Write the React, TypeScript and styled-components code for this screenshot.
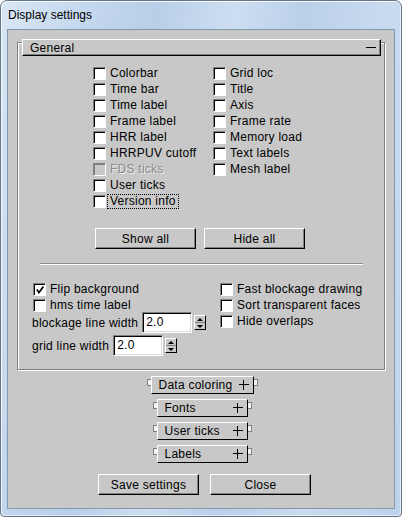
import React from "react";
import styled, { createGlobalStyle } from "styled-components";

const GlobalStyle = createGlobalStyle`
  html, body { margin: 0; padding: 0; background: #ffffff; }
  body { font-family: "Liberation Sans", Arial, sans-serif; font-size: 12px; color: #000; }
  * { box-sizing: border-box; }
`;

const Window = styled.div`
  width: 402px;
  height: 517px;
  border: 1px solid #66778a;
  border-radius: 7px 7px 4px 4px;
  padding: 0 6px 7px 6px;
  display: flex;
  flex-direction: column;
  background: linear-gradient(
    100deg,
    #d9e6f4 0%,
    #c3d7ed 18%,
    #b8cfe9 32%,
    #cddef1 48%,
    #bad0ea 62%,
    #c9dbef 80%,
    #bdd3eb 100%
  );
  box-shadow: inset 1px 1px 0 rgba(255, 255, 255, 0.75), inset -1px -1px 0 rgba(255, 255, 255, 0.55);
`;

const TitleBar = styled.div`
  height: 28px;
  display: flex;
  align-items: center;
  padding-left: 1px;
  font-family: "Liberation Sans", Arial, sans-serif;
  font-size: 12px;
  color: #000;
`;

const Client = styled.div`
  flex: 1;
  border: 1px solid #8597ad;
  background: #c8c8c8;
  padding: 12px 9px 0 9px;
  display: flex;
  flex-direction: column;
  letter-spacing: 0.25px;
`;

const Panel = styled.div`
  border: 1px solid #808080;
  box-shadow: 1px 1px 0 #ffffff, inset 1px 1px 0 #ffffff;
  padding-bottom: 13px;
  display: flex;
  flex-direction: column;
`;

const PanelHeader = styled.div`
  margin: -4px 3px 0 4px;
  height: 17px;
  display: flex;
  align-items: center;
  justify-content: space-between;
  padding: 0 4px 0 7px;
  border: 1px solid;
  border-color: #ffffff #000000 #000000 #ffffff;
  box-shadow: inset -1px -1px 0 #808080;
  background: #c8c8c8;
`;

const Minus = styled.span`
  width: 10px;
  height: 1px;
  background: #000;
`;

const CheckGrid = styled.div`
  margin-top: 10px;
  padding-left: 75px;
  display: grid;
  grid-template-columns: 120px auto;
  grid-template-rows: repeat(9, 16px);
  grid-auto-flow: column;
`;

const CheckRow = styled.div<{ $indent?: number }>`
  display: flex;
  align-items: flex-start;
  height: 16px;
  margin-left: ${(p) => p.$indent ?? 0}px;
`;

const Box = styled.span<{ $disabled?: boolean }>`
  flex: none;
  width: 13px;
  height: 13px;
  margin-top: 1px;
  border: 1px solid;
  border-color: #808080 #ffffff #ffffff #808080;
  box-shadow: inset 1px 1px 0 ${(p) => (p.$disabled ? "#808080" : "#000000")};
  background: ${(p) => (p.$disabled ? "#c8c8c8" : "#ffffff")};
  display: flex;
  align-items: center;
  justify-content: center;
  padding: 1px 0 0 1px;
`;

const Label = styled.span<{ $focused?: boolean; $disabled?: boolean }>`
  margin-left: 1px;
  padding: 0 2px;
  border: 1px dotted ${(p) => (p.$focused ? "#000000" : "transparent")};
  line-height: 13px;
  white-space: nowrap;
  color: ${(p) => (p.$disabled ? "#8a8a8a" : "#000000")};
  text-shadow: ${(p) => (p.$disabled ? "1px 1px 0 #ececec" : "none")};
`;

const ButtonRow = styled.div`
  margin-top: 18px;
  display: flex;
  justify-content: center;
  gap: 8px;
  padding-right: 2px;
`;

const Button = styled.button`
  width: 101px;
  height: 21px;
  padding: 0;
  margin: 0;
  font: inherit;
  letter-spacing: inherit;
  color: #000;
  background: #c8c8c8;
  border: 1px solid;
  border-color: #ffffff #000000 #000000 #ffffff;
  box-shadow: inset -1px -1px 0 #808080;
`;

const Separator = styled.div`
  margin: 14px 21px 0 22px;
  border-top: 1px solid #8c8c8c;
  border-bottom: 1px solid #ffffff;
`;

const Options = styled.div`
  margin-top: 17px;
  display: flex;
`;

const LeftCol = styled.div`
  width: 202px;
  padding-left: 14px;
  display: flex;
  flex-direction: column;
`;

const RightCol = styled.div`
  display: flex;
  flex-direction: column;
`;

const SpinRow = styled.div<{ $gap: number }>`
  display: flex;
  align-items: center;
  height: 21px;
  margin-top: ${(p) => p.$gap}px;
  white-space: nowrap;
`;

const Field = styled.div`
  width: 50px;
  height: 21px;
  margin-left: 4px;
  border: 1px solid;
  border-color: #808080 #ffffff #ffffff #808080;
  box-shadow: inset 1px 1px 0 #000000, inset -1px -1px 0 #dcdcdc;
  background: #ffffff;
  padding-left: 3px;
  line-height: 19px;
`;

const Spinner = styled.div`
  width: 12px;
  height: 15px;
  margin-left: 2px;
  border: 1px solid;
  border-color: #ffffff #000000 #000000 #ffffff;
  background: #c8c8c8;
  display: flex;
  flex-direction: column;
`;

const SpinHalf = styled.div<{ $down?: boolean }>`
  flex: 1;
  display: flex;
  align-items: center;
  justify-content: center;
  border-top: ${(p) => (p.$down ? "1px solid #808080" : "none")};
`;

const Arrow = styled.span<{ $down?: boolean }>`
  width: 0;
  height: 0;
  border-left: 3px solid transparent;
  border-right: 3px solid transparent;
  ${(p) => (p.$down ? "border-top: 3px solid #000;" : "border-bottom: 3px solid #000;")}
`;

const Rollouts = styled.div`
  margin-top: 6px;
  display: flex;
  flex-direction: column;
  align-items: center;
  gap: 5px;
  padding-left: 2px;
`;

const Rollout = styled.div`
  display: flex;
  align-items: flex-start;
  height: 18px;
`;

const Stub = styled.span<{ $right?: boolean }>`
  width: 4px;
  height: 7px;
  margin-top: 3px;
  border: 1px solid #808080;
  ${(p) => (p.$right ? "border-left: none;" : "border-right: none;")}
  background: #f2f2f2;
`;

const RollButton = styled.div<{ $w: number }>`
  width: ${(p) => p.$w}px;
  height: 18px;
  display: flex;
  align-items: center;
  justify-content: space-between;
  padding: 0 4px 0 7px;
  border: 1px solid;
  border-color: #ffffff #000000 #000000 #ffffff;
  background: #c8c8c8;
  white-space: nowrap;
`;

const Actions = styled.div`
  margin-top: 11px;
  display: flex;
  justify-content: center;
  gap: 11px;
  padding-left: 7px;
`;

const CheckMark = () => (
  <svg width="8" height="8" viewBox="0 0 8 8">
    <path d="M0.8 3.6 L2.9 6.6 L7.4 0.6" stroke="#000" strokeWidth="1.7" fill="none" />
  </svg>
);

const Plus = () => (
  <svg width="10" height="10" viewBox="0 0 10 10">
    <path d="M0 4.5h10M4.5 0v10" stroke="#000" strokeWidth="1" shapeRendering="crispEdges" />
  </svg>
);

type CheckProps = {
  label: string;
  checked?: boolean;
  disabled?: boolean;
  focused?: boolean;
  indent?: number;
};

const Check = ({ label, checked, disabled, focused, indent }: CheckProps) => (
  <CheckRow $indent={indent}>
    <Box $disabled={disabled}>{checked ? <CheckMark /> : null}</Box>
    <Label $focused={focused} $disabled={disabled}>
      {label}
    </Label>
  </CheckRow>
);

const Spin = () => (
  <Spinner>
    <SpinHalf>
      <Arrow />
    </SpinHalf>
    <SpinHalf $down>
      <Arrow $down />
    </SpinHalf>
  </Spinner>
);

const leftChecks: CheckProps[] = [
  { label: "Colorbar" },
  { label: "Time bar" },
  { label: "Time label" },
  { label: "Frame label" },
  { label: "HRR label" },
  { label: "HRRPUV cutoff" },
  { label: "FDS ticks", disabled: true },
  { label: "User ticks" },
  { label: "Version info", focused: true },
];

const rightChecks: CheckProps[] = [
  { label: "Grid loc" },
  { label: "Title" },
  { label: "Axis" },
  { label: "Frame rate" },
  { label: "Memory load" },
  { label: "Text labels" },
  { label: "Mesh label" },
];

const rollouts = [
  { label: "Data coloring", w: 103 },
  { label: "Fonts", w: 91 },
  { label: "User ticks", w: 91 },
  { label: "Labels", w: 91 },
];

export default function App() {
  return (
    <>
      <GlobalStyle />
      <Window>
        <TitleBar>Display settings</TitleBar>
        <Client>
          <Panel>
            <PanelHeader>
              <span>General</span>
              <Minus />
            </PanelHeader>
            <CheckGrid>
              {[...leftChecks, ...rightChecks].map((c) => (
                <Check key={c.label} {...c} />
              ))}
            </CheckGrid>
            <ButtonRow>
              <Button>Show all</Button>
              <Button>Hide all</Button>
            </ButtonRow>
            <Separator />
            <Options>
              <LeftCol>
                <Check label="Flip background" checked indent={1} />
                <Check label="hms time label" indent={1} />
                <SpinRow $gap={-2}>
                  blockage line width
                  <Field>2.0</Field>
                  <Spin />
                </SpinRow>
                <SpinRow $gap={2}>
                  grid line width
                  <Field>2.0</Field>
                  <Spin />
                </SpinRow>
              </LeftCol>
              <RightCol>
                <Check label="Fast blockage drawing" />
                <Check label="Sort transparent faces" />
                <Check label="Hide overlaps" />
              </RightCol>
            </Options>
          </Panel>
          <Rollouts>
            {rollouts.map((r) => (
              <Rollout key={r.label}>
                <Stub />
                <RollButton $w={r.w}>
                  <span>{r.label}</span>
                  <Plus />
                </RollButton>
                <Stub $right />
              </Rollout>
            ))}
          </Rollouts>
          <Actions>
            <Button>Save settings</Button>
            <Button>Close</Button>
          </Actions>
        </Client>
      </Window>
    </>
  );
}
